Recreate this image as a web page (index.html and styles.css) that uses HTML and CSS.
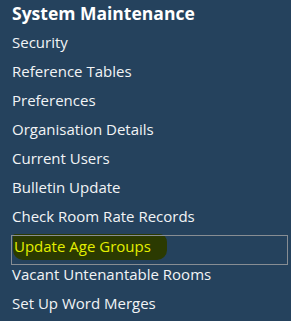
FILE: index.html
```html
<!DOCTYPE html>
<html lang="en">
<head>
    <meta charset="UTF-8">
    <title>System Maintenance</title>
    <link rel="stylesheet" href="styles.css">
</head>
<body>
<div id="menu">
    <h1 class="menu-title">System Maintenance</h1>
    <ul class="menu-list">
        <li class="menu-item">Security</li>
        <li class="menu-item">Reference Tables</li>
        <li class="menu-item">Preferences</li>
        <li class="menu-item">Organisation Details</li>
        <li class="menu-item">Current Users</li>
        <li class="menu-item">Bulletin Update</li>
        <li class="menu-item">Check Room Rate Records</li>
        <li class="menu-item selected"><span class="marker">Update Age Groups</span></li>
        <li class="menu-item">Vacant Untenantable Rooms</li>
        <li class="menu-item">Set Up Word Merges</li>
    </ul>
</div>
</body>
</html>
```

FILE: styles.css
```css
* {
    box-sizing: border-box;
}
body {
    margin: 0;
    background-color: #25425d;
    color: #f2f4f6;
    font-family: 'Open Sans', sans-serif;
    height: 321px;
    overflow: hidden;
}
#menu {
    padding: 0 3px 0 12px;
}
.menu-title {
    font-size: 17.5px;
    font-weight: bold;
    color: #fff;
    margin: 0 0 1px 0;
    height: 27px;
    line-height: 27px;
}
.menu-list {
    list-style: none;
    margin: 0;
    padding: 0;
}
.menu-item {
    height: 29px;
    line-height: 29px;
    font-size: 15px;
    white-space: nowrap;
}
.menu-item.selected {
    position: relative;
    color: #e4ef00;
    line-height: 31px;
}
.menu-item.selected::before {
    content: "";
    position: absolute;
    top: 4px;
    left: -1px;
    right: 0;
    height: 28px;
    border: 1px solid #878d93;
}
.marker {
    margin-left: 1px;
    background-color: #2b3a01;
    padding: 2px 16px 4px 1px;
    border-radius: 2px 8px 10px 10px;
}
```
